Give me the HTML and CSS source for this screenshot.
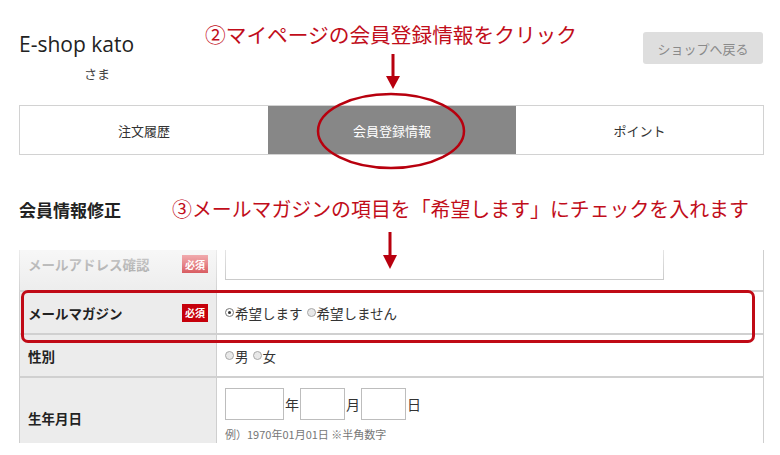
FILE: index.html
```html
<!DOCTYPE html>
<html lang="ja">
<head>
  <meta charset="UTF-8" />
  <title>会員情報修正</title>
  <link rel="stylesheet" href="styles.css">
</head>
<body>
  <div class="page">
    <header class="top">
      <div class="brand">
        <div class="shop-name">E-shop kato</div>
        <div class="sama">さま</div>
      </div>
      <a class="back-btn">ショップへ戻る</a>
    </header>

    <nav class="tabs">
      <div class="tab">注文履歴</div>
      <div class="tab active">会員登録情報</div>
      <div class="tab">ポイント</div>
    </nav>

    <h2 class="section-title">会員情報修正</h2>

    <div class="form-wrap">
      <div class="form-row first">
        <div class="label">メールアドレス確認<span class="required">必須</span></div>
        <div class="field"><div class="text-input wide"></div></div>
      </div>
      <div class="form-row">
        <div class="label">メールマガジン<span class="required">必須</span></div>
        <div class="field">
          <span class="radio checked"></span>希望します
          <span class="radio"></span>希望しません
        </div>
      </div>
      <div class="form-row">
        <div class="label">性別</div>
        <div class="field">
          <span class="radio"></span>男
          <span class="radio"></span>女
        </div>
      </div>
      <div class="form-row birth">
        <div class="label">生年月日</div>
        <div class="field">
          <div class="date-line">
            <div class="text-input small"></div>年
            <div class="text-input smaller"></div>月
            <div class="text-input smaller"></div>日
          </div>
          <div class="hint">例）1970年01月01日 ※半角数字</div>
        </div>
      </div>
      <div class="fade"></div>
    </div>

    <!-- annotations -->
    <div class="note note-1">②マイページの会員登録情報をクリック</div>
    <svg class="arrow arrow-1" width="20" height="36" viewBox="0 0 20 36">
      <rect x="8.5" y="0" width="3" height="24" fill="#b8000e"/>
      <polygon points="3,22 17,22 10,35" fill="#b8000e"/>
    </svg>
    <svg class="circle-mark" width="152" height="80" viewBox="0 0 152 80">
      <ellipse cx="76" cy="40" rx="73" ry="37" fill="none" stroke="#b8000e" stroke-width="2.5"/>
    </svg>

    <div class="note note-2">③メールマガジンの項目を「希望します」にチェックを入れます</div>
    <svg class="arrow arrow-2" width="20" height="38" viewBox="0 0 20 38">
      <rect x="8.5" y="0" width="3" height="25" fill="#b8000e"/>
      <polygon points="3,23 17,23 10,37" fill="#b8000e"/>
    </svg>
    <div class="highlight"></div>
  </div>
</body>
</html>
```

FILE: styles.css
```css
body {
  margin: 0;
  padding: 0;
  background: #fff;
  font-family: "Noto Sans CJK JP", "Noto Sans", sans-serif;
  color: #333;
}

.page {
  position: relative;
  width: 780px;
  height: 455px;
  padding: 0 16px 0 19px;
  box-sizing: border-box;
  overflow: hidden;
}

.top {
  height: 105px;
  box-sizing: border-box;
  padding-top: 32px;
  display: flex;
  justify-content: space-between;
  align-items: flex-start;
}

.shop-name {
  font-family: "Open Sans", "DejaVu Sans", sans-serif;
  font-size: 21px;
  line-height: 24px;
  font-weight: 500;
  color: #222;
}

.sama {
  margin: 10px 0 0 65px;
  font-size: 13px;
  line-height: 16px;
  color: #444;
}

.back-btn {
  width: 120px;
  height: 32px;
  margin-right: 1px;
  display: flex;
  align-items: center;
  justify-content: center;
  background: #dedede;
  border-radius: 3px;
  color: #8a8a8a;
  font-size: 13px;
}

.tabs {
  display: grid;
  grid-template-columns: 248px 248px 1fr;
  height: 50px;
  border: 1px solid #d2d2d2;
  box-sizing: border-box;
}

.tab {
  display: flex;
  align-items: center;
  justify-content: center;
  font-size: 13px;
  color: #333;
}

.tab.active {
  background: #878787;
  color: #fff;
}

.section-title {
  margin: 43px 0 28px;
  font-size: 17px;
  line-height: 24px;
  font-weight: bold;
  color: #222;
}

.form-wrap {
  position: relative;
  width: 745px;
  height: 193px;
  overflow: hidden;
  border-right: 1px solid #cfcfcf;
  box-sizing: border-box;
}

.form-row {
  display: grid;
  grid-template-columns: 198px 1fr;
  height: 43px;
  border-bottom: 2px solid #d0d0d0;
  box-sizing: border-box;
}

.form-row.first {
  height: 42px;
}

.form-row.birth {
  height: 80px;
  border-bottom: none;
}

.label {
  display: flex;
  align-items: center;
  justify-content: space-between;
  padding: 0 8px 0 8px;
  background: #ececec;
  border-left: 1px solid #cfcfcf;
  border-right: 1px solid #cfcfcf;
  font-size: 13.5px;
  font-weight: bold;
  color: #222;
}

.first .label {
  color: #8f8f8f;
  padding-bottom: 12px;
}

.required {
  width: 26px;
  height: 18px;
  display: flex;
  align-items: center;
  justify-content: center;
  background: #c6000b;
  color: #fff;
  font-size: 10px;
  font-weight: bold;
}

.first .required {
  background: linear-gradient(#e04a50, #c8161e);
}

.field {
  display: flex;
  align-items: center;
  padding: 0 8px;
  font-size: 13.5px;
  color: #333;
}

.first .field {
  align-items: flex-start;
}

.birth .field {
  flex-direction: column;
  align-items: flex-start;
  padding-top: 10px;
}

.text-input {
  height: 32px;
  border: 1px solid #bdbdbd;
  box-sizing: border-box;
  background: #fff;
}

.text-input.wide {
  width: 439px;
  margin-top: -2px;
}

.text-input.small {
  width: 59px;
}

.text-input.smaller {
  width: 45px;
}

.date-line {
  display: flex;
  align-items: center;
  gap: 1px;
  font-size: 14px;
  color: #333;
}

.hint {
  margin-top: 6px;
  font-size: 11px;
  color: #777;
}

.radio {
  display: inline-block;
  width: 9px;
  height: 9px;
  border: 1px solid #a8a8a8;
  border-radius: 50%;
  background: #e8e8e8;
  box-sizing: border-box;
  position: relative;
  margin: 0 1px 0 4px;
}

.radio:first-child {
  margin-left: 0;
}

.radio.checked {
  background: #fff;
  border-color: #777;
}

.radio.checked::after {
  content: "";
  position: absolute;
  left: 2px;
  top: 2px;
  width: 3px;
  height: 3px;
  border-radius: 50%;
  background: #333;
}

.fade {
  position: absolute;
  left: 0;
  top: 0;
  right: 0;
  height: 42px;
  background: linear-gradient(rgba(255,255,255,0.6), rgba(255,255,255,0.05));
  pointer-events: none;
}

.note {
  position: absolute;
  color: #c10d1a;
  font-size: 20.7px;
  line-height: 28px;
  white-space: nowrap;
}

.note-1 {
  left: 205px;
  top: 20px;
}

.note-2 {
  left: 172px;
  top: 195px;
  font-size: 19.9px;
}

.arrow {
  position: absolute;
}

.arrow-1 {
  left: 383px;
  top: 54px;
}

.arrow-2 {
  left: 380px;
  top: 232px;
}

.circle-mark {
  position: absolute;
  left: 315px;
  top: 91px;
}

.highlight {
  position: absolute;
  left: 21px;
  top: 290px;
  width: 734px;
  height: 53px;
  border: 3px solid #c00a16;
  border-radius: 7px;
  box-sizing: border-box;
}
```
